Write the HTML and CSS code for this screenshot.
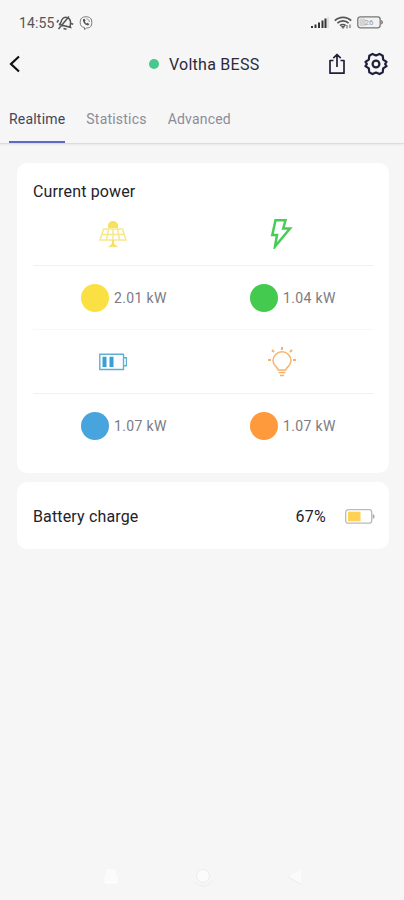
FILE: index.html
```html
<!DOCTYPE html>
<html lang="en">
<head>
  <meta charset="UTF-8">
  <meta name="viewport" content="width=device-width, initial-scale=1.0">
  <title>Voltha BESS</title>
  <link rel="stylesheet" href="styles.css">
</head>
<body>
  <div class="status-bar">
    <span class="clock">14:55</span>
    <svg class="bell" width="18" height="16" viewBox="0 0 18 16" fill="none" stroke="#555" stroke-width="1.5">
      <path d="M3 9.500l11.500 2.800c-1-2 .5-3.500 0-6C13.500 2 8 .8 6 4.500 5 6.500 5 9 3 9.500zM7.500 13.500l3 .8M2.500 14L13 1.500M2.500 5L1 7.500M15 8.500l2.200.8"/>
    </svg>
    <svg class="viber" width="14" height="14" viewBox="0 0 14 14" fill="none" stroke="#777" stroke-width="1">
      <path d="M7 .8c4 0 5.800 1.700 5.800 5.700S11 12 7.500 12l-2 1.600v-2C2.500 11 1.200 9.500 1.200 6.500 1.200 2.500 3 .8 7 .8z"/>
      <path d="M4 3.200c-.5 2.800 2 6 5.300 6.300l1-1.400-1.900-1.300-.8.700c-.8-.3-1.500-1.200-1.700-2l.7-.8-1-1.900z" fill="#555" stroke="none"/>
      <path d="M7.500 3c1.800.1 2.800 1.200 2.900 3" stroke-width=".8"/>
    </svg>
    <div class="status-right">
      <svg width="18" height="12" viewBox="0 0 18 12" fill="#333">
        <path d="M0 9h2v2H0zM3.500 7.500h2V11h-2zM7 5.500h2V11H7zM10.500 3.500h2V11h-2zM13.500 1.500h2V11h-2z"/>
        <path d="M16.500 0h1v11h-1z" fill="#ccc"/>
      </svg>
      <svg width="18" height="14" viewBox="0 0 18 14" fill="none" stroke="#555" stroke-width="1.700">
        <path d="M.8 4.700c4.500-4.500 11.900-4.500 16.400 0M3.400 7.200c3-3 8.200-3 11.200 0M6 9.700c1.600-1.600 4-1.600 5.600 0"/>
        <path d="M7.500 10.500h3L9 12.500zM13 9v3.500M16 8.500V12" stroke-width="1"/>
      </svg>
      <svg width="27" height="13" viewBox="0 0 27 13">
        <rect x=".8" y=".8" width="22.400" height="11" rx="2.500" fill="#f2f2f2" stroke="#777" stroke-width="1.300"/>
        <rect x="2.500" y="2.500" width="6" height="7.600" rx="1" fill="#d4d4d4"/>
        <path d="M24.300 4c2 .6 2 4 0 4.600z" fill="#666"/>
        <text x="12" y="9.300" text-anchor="middle" class="level">26</text>
      </svg>
    </div>
  </div>

  <header class="header">
    <svg class="back" width="12" height="18" viewBox="0 0 12 18" fill="none" stroke="#111" stroke-width="2.200">
      <path d="M10 1.500L2 9l8 7.500"/>
    </svg>
    <div class="title"><span class="online"></span>Voltha BESS</div>
    <svg class="share" width="18" height="22" viewBox="0 0 18 22" fill="none" stroke="#1f1f3a" stroke-width="1.700" stroke-linejoin="round">
      <path d="M5.500 7.500H2v12.700h14V7.500h-3.500M9 14V2M5.300 5.200L9 1.500l3.700 3.700"/>
    </svg>
    <svg class="gear" width="24" height="24" viewBox="0 0 24 24" fill="none" stroke="#1f1f3a" stroke-width="2.200" stroke-linejoin="round">
      <path d="M8.500 1.900L12 3.500l3.500-1.600 3.200 1.800.5 3.900 3.300 2.300-1.400 2.100 1.400 2.100-3.300 2.300-.5 3.900-3.200 1.800-3.500-1.600-3.500 1.600-3.200-1.800-.5-3.900-3.300-2.300 1.400-2.100-1.400-2.100 3.300-2.300.5-3.900z"/>
      <circle cx="12" cy="12" r="3.400"/>
    </svg>
  </header>

  <nav class="tabs">
    <a class="tab active">Realtime</a>
    <a class="tab">Statistics</a>
    <a class="tab">Advanced</a>
  </nav>

  <main>
    <section class="card power">
      <h2>Current power</h2>
      <div class="row icons">
        <!-- solar -->
        <svg width="28" height="28" viewBox="0 0 28 28" fill="none" stroke="#f7e88c" stroke-width="1.500">
          <path d="M9 8V5.500a5 4.500 0 0 1 10 0V8z" fill="#f8e060" stroke="none"/>
          <path d="M4.500 9h19l3.500 11H1zM3 14.500h22M14 9v11M9.500 9L7.500 20M18.500 9l2 11M9.500 26.500h9"/>
          <path d="M13 20h2v3.500l3 3h-8l3-3z" fill="#f8e060" stroke="none"/>
        </svg>
        <!-- grid -->
        <svg width="28" height="30" viewBox="0 0 28 30" fill="none" stroke="#48cc53" stroke-width="2.500">
          <path d="M7.500 1.300h10L15.200 9.500h6.800L7 27.500l2-11.500H4.300z"/>
        </svg>
      </div>
      <div class="row values">
        <div class="value"><span class="dot solar"></span>2.01 kW</div>
        <div class="value"><span class="dot grid"></span>1.04 kW</div>
      </div>
      <div class="row icons">
        <!-- battery -->
        <svg width="28" height="28" viewBox="0 0 28 28" fill="none" stroke="#5eafd0" stroke-width="1.400">
          <path d="M.8 6.200h23.700v15.300H.8zM24.500 9.700h3v8h-3"/>
          <path d="M3.500 8.700h4V19h-4zM10.500 8.700h4V19h-4z" fill="#3b9fd6" stroke="none"/>
        </svg>
        <!-- load -->
        <svg width="28" height="30" viewBox="0 0 28 30" fill="none" stroke="#f6b26b" stroke-width="1.500">
          <path d="M10.300 23c0-2.500-5.300-4-5.300-9.200a9 9 0 0 1 18 0c0 5.200-5.300 6.700-5.300 9.200zM10.500 25.500h7M12 28.500h4"/>
          <path d="M14 0v3M4 3l2 2M24 3l-2 2M0 13h3M25 13h3" stroke-width="2"/>
        </svg>
      </div>
      <div class="row values">
        <div class="value"><span class="dot battery"></span>1.07 kW</div>
        <div class="value"><span class="dot load"></span>1.07 kW</div>
      </div>
    </section>

    <section class="card charge">
      <h2>Battery charge</h2>
      <span class="percent">67%</span>
      <svg width="30" height="16" viewBox="0 0 30 16">
        <rect x=".7" y=".7" width="26" height="13.500" rx="2.500" fill="#fff" stroke="#bbb" stroke-width="1.300"/>
        <rect x="3" y="2.700" width="12.500" height="9.600" fill="#ffd155"/>
        <path d="M27.700 5c2.600.7 2.600 4.300 0 5z" fill="#aaa"/>
      </svg>
    </section>
  </main>

  <div class="nav-bar">
    <svg width="18" height="16" viewBox="0 0 18 16" fill="#fbfbfb"><path d="M5 0h8l3 10v3H2v-3z"/><path d="M3 13h12v1.500H3z" fill="#fff"/></svg>
    <svg width="20" height="22" viewBox="0 0 20 22" fill="#fbfbfb" stroke="#ececec"><circle cx="10" cy="10" r="6.500"/><path d="M1 15c4 7 14 7 18 0" fill="none"/></svg>
    <svg width="18" height="18" viewBox="0 0 18 18" fill="#fbfbfb"><path d="M15 1v15L2 9z"/><path d="M2 9l13 7" stroke="#ececec"/></svg>
  </div>
</body>
</html>
```
FILE: styles.css
```css
* {
  box-sizing: border-box;
}
body {
  margin: 0;
  height: 900px;
  display: flex;
  flex-direction: column;
  background-color: #f6f6f6;
  color: #22222a;
  font-family: Roboto, sans-serif;
}
h2 {
  margin: 0;
  font-size: 16px;
  font-weight: 400;
  line-height: 20px;
  letter-spacing: 0.15px;
}
svg {
  display: block;
  flex-shrink: 0;
}

/* status bar */
.status-bar {
  height: 43px;
  padding: 2px 20px 0 19px;
  display: flex;
  align-items: center;
}
.clock {
  width: 37px;
  font-size: 14px;
  letter-spacing: 0.1px;
  color: #555;
}
.viber {
  margin-left: 5px;
}
.status-right {
  margin-left: auto;
  display: flex;
  align-items: center;
  gap: 5px;
}
.level {
  font-size: 8px;
  fill: #999;
}

/* header */
.header {
  height: 42px;
  padding: 0 16px 0 9px;
  display: flex;
  align-items: center;
}
.title {
  display: flex;
  align-items: center;
  margin: 0 auto 0 128px;
  font-size: 16px;
  letter-spacing: 0.25px;
  color: #2b2b3c;
}
.online {
  width: 10px;
  height: 10px;
  margin-right: 10px;
  border-radius: 50%;
  background-color: #46c88e;
}
.share {
  margin-right: 18px;
}

/* tabs */
.tabs {
  height: 59px;
  padding-left: 9px;
  display: flex;
  align-items: flex-end;
  gap: 21px;
  border-bottom: 1px solid #dcdcde;
  box-shadow: 0 1px 2px rgba(0, 0, 0, 0.06);
}
.tab {
  height: 34px;
  font-size: 14px;
  line-height: 20px;
  letter-spacing: 0.2px;
  color: #8c8c98;
}
.tab.active {
  color: #45455a;
  border-bottom: 2px solid #5f68c4;
}

/* cards */
main {
  padding: 19px 15px 0 17px;
}
.card {
  border-radius: 10px;
  background-color: #fff;
}
.power {
  height: 310px;
  padding: 19px 15px 0 16px;
}
.row {
  height: 64px;
  display: grid;
  grid-template-columns: 169px 1fr;
  align-items: center;
}
.icons {
  padding-left: 66px;
  border-bottom: 1px solid #f0f0f0;
}
.values {
  padding-left: 48px;
  border-bottom: 1px solid #f8f8f8;
}
.values:last-child {
  border-bottom: none;
}
.value {
  display: flex;
  align-items: center;
  font-size: 14px;
  letter-spacing: 0.35px;
  color: #7b7b84;
}
.dot {
  width: 28px;
  height: 28px;
  margin-right: 5px;
  border-radius: 50%;
}
.solar {
  background-color: #fbe044;
}
.grid {
  background-color: #43ca4f;
}
.battery {
  background-color: #48a4dc;
}
.load {
  background-color: #ff9a3c;
}
.charge {
  height: 67px;
  margin-top: 9px;
  padding: 2px 14px 0 16px;
  display: flex;
  align-items: center;
}
.percent {
  margin: 0 19px 0 auto;
  font-size: 16px;
  letter-spacing: 0.3px;
}

/* navigation buttons */
.nav-bar {
  margin-top: auto;
  padding: 0 100px 12px 102px;
  display: flex;
  align-items: center;
  justify-content: space-between;
}
```
